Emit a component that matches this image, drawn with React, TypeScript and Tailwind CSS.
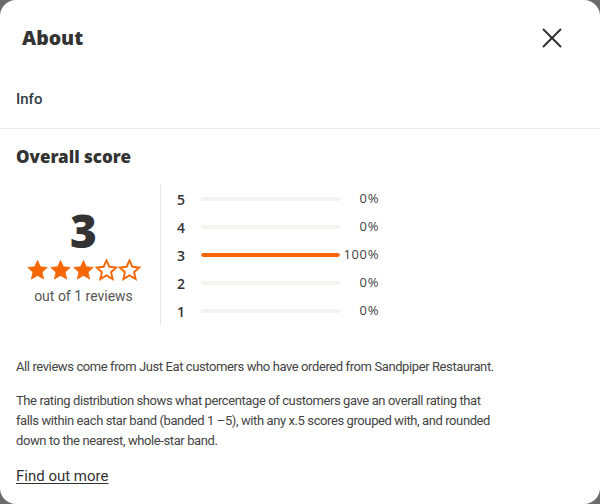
import { X } from 'lucide-react'

const bands = [
  { star: 5, pct: 0 },
  { star: 4, pct: 0 },
  { star: 3, pct: 100 },
  { star: 2, pct: 0 },
  { star: 1, pct: 0 },
]

const Star = ({ filled }: { filled: boolean }) => (
  <svg width="23" height="22" viewBox="0 0 24 23">
    <path
      d="M12 1.5l3 6.6 7.2.8-5.4 4.9 1.6 7.1L12 17.2l-6.4 3.7 1.6-7.1-5.4-4.9 7.2-.8z"
      fill={filled ? '#f36805' : 'none'}
      stroke="#f36805"
      strokeWidth={filled ? 0.8 : 2}
      strokeLinejoin="miter"
    />
  </svg>
)

export default function App() {
  return (
    <div className="w-[600px] h-[504px] bg-[#6b6b6b] overflow-hidden">
      <div className="h-full bg-white rounded-[16px] text-[#333] font-['Roboto',sans-serif]">
        {/* Header */}
        <div className="flex items-center justify-between pl-[22px] pr-[31px] pt-[18px] h-[58px]">
          <h1 className="text-[19.5px] font-black font-['Noto_Sans',sans-serif]">About</h1>
          <X size={34} strokeWidth={1.4} className="text-[#333]" />
        </div>

        {/* Tabs */}
        <div className="border-b border-[#ececec] px-4 h-[71px] flex items-center pt-[12px]">
          <span className="text-[15px] font-medium text-[#2f3d44]">Info</span>
        </div>

        <div className="px-4">
          <h2 className="mt-[16px] text-[17px] leading-[24px] font-black font-['Noto_Sans',sans-serif]">Overall score</h2>

          {/* Score block */}
          <div className="flex mt-[16px]">
            <div className="w-[145px] h-[140px] border-r border-[#e6e6e6] flex flex-col items-center pt-[22px] pr-[9px]">
              <div className="text-[46px] leading-[46px] font-black font-['Noto_Sans',sans-serif]">3</div>
              <div className="flex mt-[6px]">
                {[0, 1, 2, 3, 4].map((i) => (
                  <Star key={i} filled={i < 3} />
                ))}
              </div>
              <div className="text-[14px] text-[#555] mt-[5px]">out of 1 reviews</div>
            </div>

            <div className="flex flex-col pl-[16px]">
              {bands.map((b) => (
                <div key={b.star} className="flex items-center h-[28px]">
                  <span className="w-[24px] text-[14px] font-semibold font-['Open_Sans',sans-serif] text-[#333]">
                    {b.star}
                  </span>
                  <div className="w-[139px] h-[4px] rounded-full bg-[#f5f3f1] overflow-hidden">
                    <div className="h-full bg-[#f36805] rounded-full" style={{ width: `${b.pct}%` }} />
                  </div>
                  <span className="w-[39px] text-right text-[13px] tracking-[0.6px] text-[#444] font-['Open_Sans',sans-serif]">
                    {b.pct}%
                  </span>
                </div>
              ))}
            </div>
          </div>

          {/* Copy */}
          <div className="max-w-[488px]">
            <p className="mt-[32px] text-[13px] leading-[20px] tracking-[-0.4px] text-[#444]">
              All reviews come from Just Eat customers who have ordered from Sandpiper Restaurant.
            </p>
            <p className="mt-[14px] text-[13px] leading-[20px] tracking-[-0.4px] text-[#444]">
              The rating distribution shows what percentage of customers gave an overall rating that falls within each
              star band (banded 1 –5), with any x.5 scores grouped with, and rounded down to the nearest, whole-star band.
            </p>
          </div>
          <a href="#" className="inline-block mt-[14px] text-[15px] text-[#333] underline underline-offset-2">
            Find out more
          </a>
        </div>
      </div>
    </div>
  )
}
